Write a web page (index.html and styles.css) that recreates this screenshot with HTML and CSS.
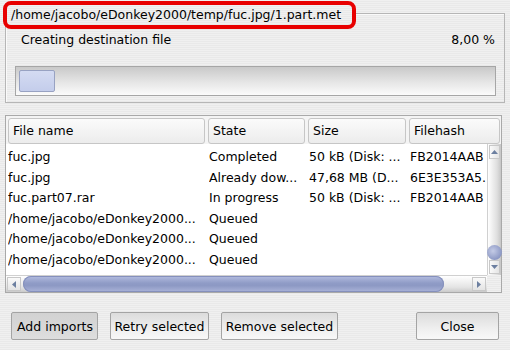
FILE: index.html
```html
<!DOCTYPE html>
<html>
<head>
<meta charset="utf-8">
<link rel="stylesheet" href="styles.css">
</head>
<body>
<div class="window">
  <div class="group">
    <div class="title">/home/jacobo/eDonkey2000/temp/fuc.jpg/1.part.met</div>
    <div class="status">
      <span>Creating destination file</span>
      <span>8,00 %</span>
    </div>
    <div class="progress"><div class="chunk"></div></div>
  </div>

  <div class="list">
    <div class="header">
      <div class="hcell">File name</div>
      <div class="hcell">State</div>
      <div class="hcell">Size</div>
      <div class="hcell">Filehash</div>
    </div>
    <div class="rows">
      <div class="row"><span>fuc.jpg</span><span>Completed</span><span>50 kB (Disk: ...</span><span>FB2014AAB</span></div>
      <div class="row"><span>fuc.jpg</span><span>Already dow...</span><span>47,68 MB (D...</span><span>6E3E353A5.</span></div>
      <div class="row"><span>fuc.part07.rar</span><span>In progress</span><span>50 kB (Disk: ...</span><span>FB2014AAB</span></div>
      <div class="row"><span>/home/jacobo/eDonkey2000...</span><span>Queued</span><span></span><span></span></div>
      <div class="row"><span>/home/jacobo/eDonkey2000...</span><span>Queued</span><span></span><span></span></div>
      <div class="row"><span>/home/jacobo/eDonkey2000...</span><span>Queued</span><span></span><span></span></div>
    </div>
    <div class="vscroll">
      <div class="arrow up"><svg width="7" height="4" viewBox="0 0 7 4"><path d="M0 4 L3.5 0 L7 4 Z" fill="#6c7fa0"/></svg></div>
      <div class="vgroove"><div class="vthumb"></div></div>
      <div class="arrow down"><svg width="7" height="4" viewBox="0 0 7 4"><path d="M0 0 L3.5 4 L7 0 Z" fill="#6c7fa0"/></svg></div>
    </div>
    <div class="hscroll">
      <div class="harrow"><svg width="4" height="7" viewBox="0 0 4 7"><path d="M4 0 L0 3.5 L4 7 Z" fill="#6c7fa0"/></svg></div>
      <div class="hgroove"><div class="hthumb"></div></div>
      <div class="harrow"><svg width="4" height="7" viewBox="0 0 4 7"><path d="M0 0 L4 3.5 L0 7 Z" fill="#6c7fa0"/></svg></div>
    </div>
    <div class="corner"></div>
  </div>

  <div class="buttons">
    <button class="btn default">Add imports</button>
    <button class="btn retry">Retry selected</button>
    <button class="btn remove">Remove selected</button>
    <span class="spacer"></span>
    <button class="btn close">Close</button>
  </div>
</div>
</body>
</html>
```

FILE: styles.css
```css
html, body {
  margin: 0;
  padding: 0;
}
body {
  width: 510px;
  height: 350px;
  overflow: hidden;
  font-family: "DejaVu Sans", "Liberation Sans", sans-serif;
  font-size: 12.5px;
  color: #000;
  background: repeating-linear-gradient(#f0f0f0 0 1px, #e9e9e9 1px 2px);
}
.window {
  padding-top: 13px;
}
.group {
  margin: 0 5px;
  height: 88px;
  border: 1px solid #b6b6b6;
  box-shadow: inset 1px 1px 0 #fafafa;
}
.title {
  position: relative;
  margin: -13px 0 0 -3px;
  width: 341px;
  height: 20px;
  line-height: 20px;
  padding-left: 4px;
  border: 4px solid #e80000;
  border-radius: 8px;
  background: repeating-linear-gradient(#f0f0f0 0 1px, #e9e9e9 1px 2px);
  white-space: nowrap;
}
.status {
  display: flex;
  justify-content: space-between;
  margin-top: 3px;
  padding: 0 9px 0 15px;
  height: 16px;
  line-height: 16px;
}
.progress {
  margin: 18px 8px 0 9px;
  height: 22px;
  padding: 3px;
  border: 1px solid #a6a6a6;
  background: linear-gradient(#c9c9c9, #e6e6e6 55%, #fbfbfb);
}
.chunk {
  width: 34px;
  height: 20px;
  border: 1px solid #98a2c2;
  border-radius: 2px;
  background: linear-gradient(#d4dbf2, #c4cdeb);
}

.list {
  margin: 12px 8px 0 5px;
  height: 176px;
  border: 1px solid #a9a9a9;
  background: #fff;
  display: grid;
  grid-template-columns: 1fr 14px;
  grid-template-rows: 28px 131px 17px;
}
.header {
  grid-column: 1 / 3;
  display: grid;
  grid-template-columns: 200px 100px 101px 1fr;
  padding-top: 2px;
  background: #f4f4f4;
}
.hcell {
  height: 24px;
  line-height: 24px;
  margin: 0 1px 0 2px;
  padding-left: 4px;
  border: 1px solid #c6c6c6;
  border-radius: 3px;
  background: linear-gradient(#fbfbfb, #ececec);
  white-space: nowrap;
  overflow: hidden;
}
.rows {
  padding-top: 3px;
  overflow: hidden;
}
.row {
  display: grid;
  grid-template-columns: 201px 100px 101px 1fr;
  height: 20.6px;
  line-height: 20.6px;
  padding-left: 2px;
  white-space: nowrap;
}
.row span {
  overflow: hidden;
}
.vscroll {
  display: flex;
  flex-direction: column;
  background: linear-gradient(90deg, #ffffff, #dedede 70%, #c6c6c6);
  border-left: 1px solid #d0d0d0;
}
.arrow {
  height: 12px;
  display: flex;
  align-items: center;
  justify-content: center;
  margin: 1px;
  border: 1px solid #c8c8c8;
  background: linear-gradient(90deg, #fafafa, #e4e4e4);
}
.vgroove {
  flex: 1;
  display: flex;
  flex-direction: column;
  justify-content: flex-end;
}
.vthumb {
  height: 15px;
  margin: 0 -1px -1px -1px;
  border-radius: 50%;
  background: radial-gradient(circle at 40% 40%, #c4cbe6, #8c98c4 70%, #7a86b4);
}
.hscroll {
  display: flex;
  align-items: stretch;
  background: linear-gradient(#ffffff, #e4e4e4 70%, #cacaca);
  border-top: 1px solid #d0d0d0;
}
.harrow {
  width: 12px;
  display: flex;
  align-items: center;
  justify-content: center;
  margin: 1px;
  border: 1px solid #c8c8c8;
  background: linear-gradient(#fafafa, #e4e4e4);
}
.hgroove {
  flex: 1;
  padding: 0 1px;
}
.hthumb {
  width: 421px;
  height: 100%;
  border-radius: 8px;
  background: linear-gradient(#b4bde0, #8f9bc6 45%, #8d99c4 60%, #aab3d8);
  box-shadow: inset 0 0 0 1px #8590bc;
}
.corner {
  background: repeating-linear-gradient(#f0f0f0 0 1px, #e9e9e9 1px 2px);
}

.buttons {
  display: flex;
  gap: 12px;
  margin: 19px 11px 0 11px;
}
.spacer {
  flex: 1;
}
.btn {
  height: 28px;
  padding: 0;
  font-family: "DejaVu Sans", "Liberation Sans", sans-serif;
  font-size: 12.5px;
  color: #000;
  border: 1px solid #a4a4a4;
  border-radius: 2px;
  background: linear-gradient(#dcdcdc, #efefef 60%, #f8f8f8);
  white-space: nowrap;
  overflow: hidden;
}
.btn.default {
  width: 87px;
  padding-left: 5px;
  background: linear-gradient(#d2d2d2, #d8d8d8 60%, #dedede);
  text-align: left;
}
.btn.retry {
  width: 99px;
}
.btn.remove {
  width: 117px;
}
.btn.close {
  width: 83px;
}
```
